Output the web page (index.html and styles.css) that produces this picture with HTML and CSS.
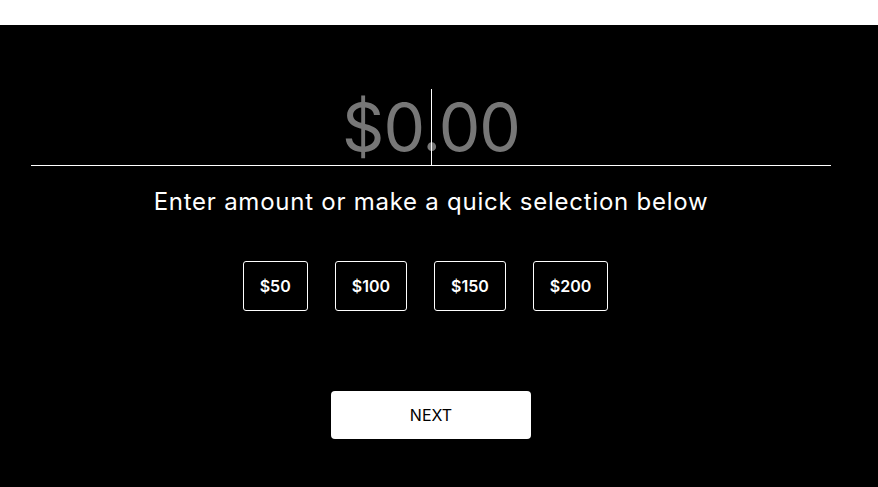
FILE: index.html
```html
<!DOCTYPE html>
<html lang="en">
<head>
	<meta charset="UTF-8">
	<meta name="viewport" content="width=device-width, initial-scale=1.0">
	<title>Enter amount</title>
	<link rel="stylesheet" href="styles.css">
</head>
<body>
	<header class="topbar"></header>

	<main class="amount-page">
		<div class="amount-form">
			<div class="amount-field">
				<span class="amount-value">$0.00</span>
				<span class="caret"></span>
			</div>

			<p class="amount-hint">Enter amount or make a quick selection below</p>

			<div class="quick-picks">
				<button class="quick-pick" type="button">$50</button>
				<button class="quick-pick" type="button">$100</button>
				<button class="quick-pick" type="button">$150</button>
				<button class="quick-pick" type="button">$200</button>
			</div>

			<button class="next-button" type="button">NEXT</button>
		</div>
	</main>
</body>
</html>
```

FILE: styles.css
```css
body {
	font-family: 'Inter', 'Liberation Sans', sans-serif;
	margin: 0;
	padding: 0;
	background-color: #000;
}

.topbar {
	height: 25px;
	background-color: #fff;
}

.amount-page {
	background-color: #000;
	color: #fff;
	min-height: calc(100vh - 25px);
	padding-right: 16px;
}

.amount-form {
	width: 800px;
	margin: 0 auto;
	padding-top: 64px;
	display: flex;
	flex-direction: column;
	align-items: center;
}

.amount-field {
	position: relative;
	width: 100%;
	height: 76px;
	border-bottom: 1px solid #fff;
	text-align: center;
}

.amount-value {
	font-size: 66px;
	line-height: 76px;
	color: #777;
	letter-spacing: -1px;
}

.caret {
	position: absolute;
	top: 0;
	left: 50%;
	width: 1px;
	height: 76px;
	background-color: #fff;
}

.amount-hint {
	margin: 20px 0 0;
	font-size: 24px;
	line-height: 32px;
	letter-spacing: 0.75px;
}

.quick-picks {
	display: flex;
	gap: 27px;
	margin-top: 43px;
	padding-right: 11px;
}

.quick-pick {
	height: 50px;
	padding: 0 16px;
	background: #000;
	color: #fff;
	border: 1px solid #fff;
	border-radius: 3px;
	font-family: inherit;
	font-size: 16px;
	font-weight: 600;
}

.next-button {
	width: 200px;
	height: 48px;
	margin-top: 80px;
	background: #fff;
	color: #000;
	border: none;
	border-radius: 4px;
	font-family: inherit;
	font-size: 16px;
}
```
